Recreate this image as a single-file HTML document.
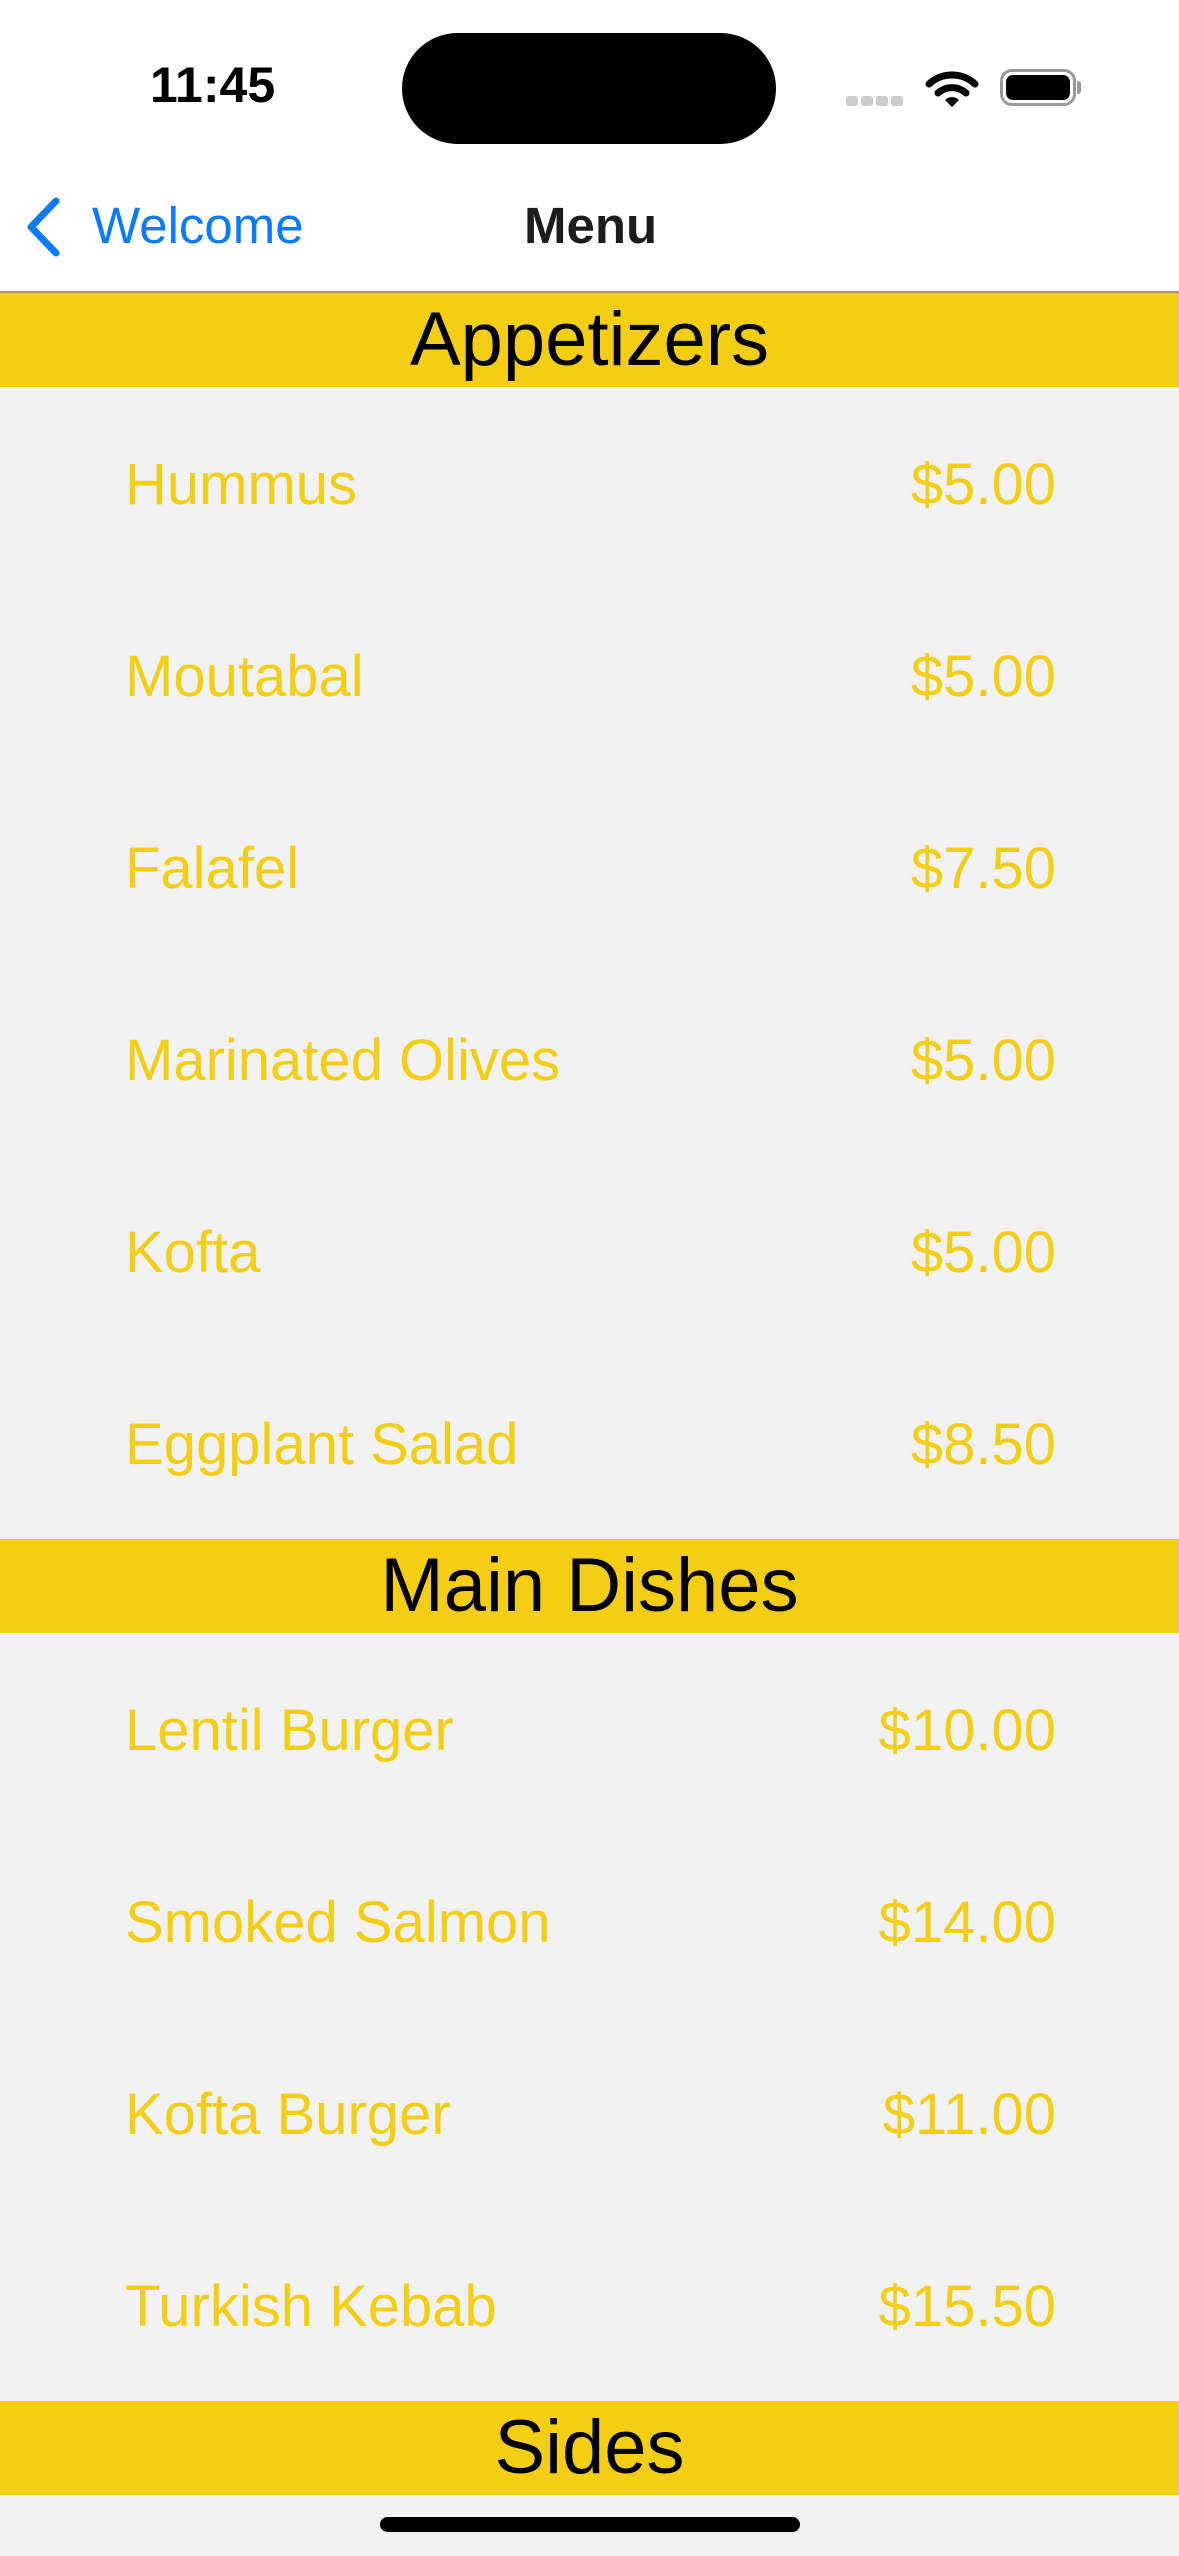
<!DOCTYPE html>
<html><head><meta charset="utf-8"><style>
*{margin:0;padding:0;box-sizing:border-box}
html,body{width:1179px;height:2556px;overflow:hidden;background:#f2f2f2;font-family:"Liberation Sans",Arial,sans-serif}
.top{position:absolute;left:0;top:0;width:1179px;height:293px;background:#fff;border-bottom:2px solid #a89a5a}
.abs{position:absolute;white-space:nowrap}
.bar{position:absolute;left:0;width:1179px;height:94px;background:#f4ce14;text-align:center;font-size:76px;line-height:94px;color:#000}
.item{position:absolute;left:125px;font-size:58px;color:#f4ce14;line-height:1}
.price{position:absolute;right:123px;font-size:58px;color:#f4ce14;line-height:1}
</style></head><body>
<div class="top">
<div class="abs" style="left:150px;top:60px;font-size:50px;font-weight:bold;line-height:50px;color:#000">11:45</div>
<div class="abs" style="left:402px;top:33px;width:374px;height:111px;background:#000;border-radius:56px"></div>
<div class="abs" style="left:846px;top:96px;width:12px;height:10px;background:#ccc;border-radius:3px"></div>
<div class="abs" style="left:861px;top:96px;width:12px;height:10px;background:#ccc;border-radius:3px"></div>
<div class="abs" style="left:876px;top:96px;width:12px;height:10px;background:#ccc;border-radius:3px"></div>
<div class="abs" style="left:891px;top:96px;width:12px;height:10px;background:#ccc;border-radius:3px"></div>
<svg class="abs" style="left:925px;top:70px" width="54" height="38" viewBox="0 0 54 38">
<path d="M4 14 A34 34 0 0 1 50 14" stroke="#000" stroke-width="7" fill="none" stroke-linecap="round"/>
<path d="M13 23 A21 21 0 0 1 41 23" stroke="#000" stroke-width="7" fill="none" stroke-linecap="round"/>
<path d="M20 30 L27 37 L34 30 A10 10 0 0 0 20 30Z" fill="#000"/>
</svg>
<div class="abs" style="left:1000px;top:69px;width:76px;height:37px;border:3px solid #999;border-radius:12px"></div>
<div class="abs" style="left:1006px;top:75px;width:64px;height:25px;background:#000;border-radius:7px"></div>
<div class="abs" style="left:1077px;top:81px;width:4px;height:13px;background:#999;border-radius:0 3px 3px 0"></div>
<svg class="abs" style="left:24px;top:196px" width="40" height="62" viewBox="0 0 40 62">
<path d="M32 5 L7 31 L32 57" stroke="#0a7aff" stroke-width="7" fill="none" stroke-linecap="round" stroke-linejoin="round"/>
</svg>
<div class="abs" style="left:92px;top:200px;font-size:51px;line-height:51px;color:#0a7aff">Welcome</div>
<div class="abs" style="left:524px;top:200px;font-size:51px;line-height:51px;font-weight:bold;color:#1c1c1c">Menu</div>
</div>

<div class="bar" style="top:293px">Appetizers</div>
<div class="item" style="top:456px">Hummus</div><div class="price" style="top:456px">$5.00</div>
<div class="item" style="top:648px">Moutabal</div><div class="price" style="top:648px">$5.00</div>
<div class="item" style="top:840px">Falafel</div><div class="price" style="top:840px">$7.50</div>
<div class="item" style="top:1032px">Marinated Olives</div><div class="price" style="top:1032px">$5.00</div>
<div class="item" style="top:1224px">Kofta</div><div class="price" style="top:1224px">$5.00</div>
<div class="item" style="top:1416px">Eggplant Salad</div><div class="price" style="top:1416px">$8.50</div>

<div class="bar" style="top:1539px">Main Dishes</div>
<div class="item" style="top:1702px">Lentil Burger</div><div class="price" style="top:1702px">$10.00</div>
<div class="item" style="top:1894px">Smoked Salmon</div><div class="price" style="top:1894px">$14.00</div>
<div class="item" style="top:2086px">Kofta Burger</div><div class="price" style="top:2086px">$11.00</div>
<div class="item" style="top:2278px">Turkish Kebab</div><div class="price" style="top:2278px">$15.50</div>

<div class="bar" style="top:2401px">Sides</div>
<div class="abs" style="left:380px;top:2517px;width:420px;height:15px;background:#000;border-radius:8px"></div>
</body></html>
